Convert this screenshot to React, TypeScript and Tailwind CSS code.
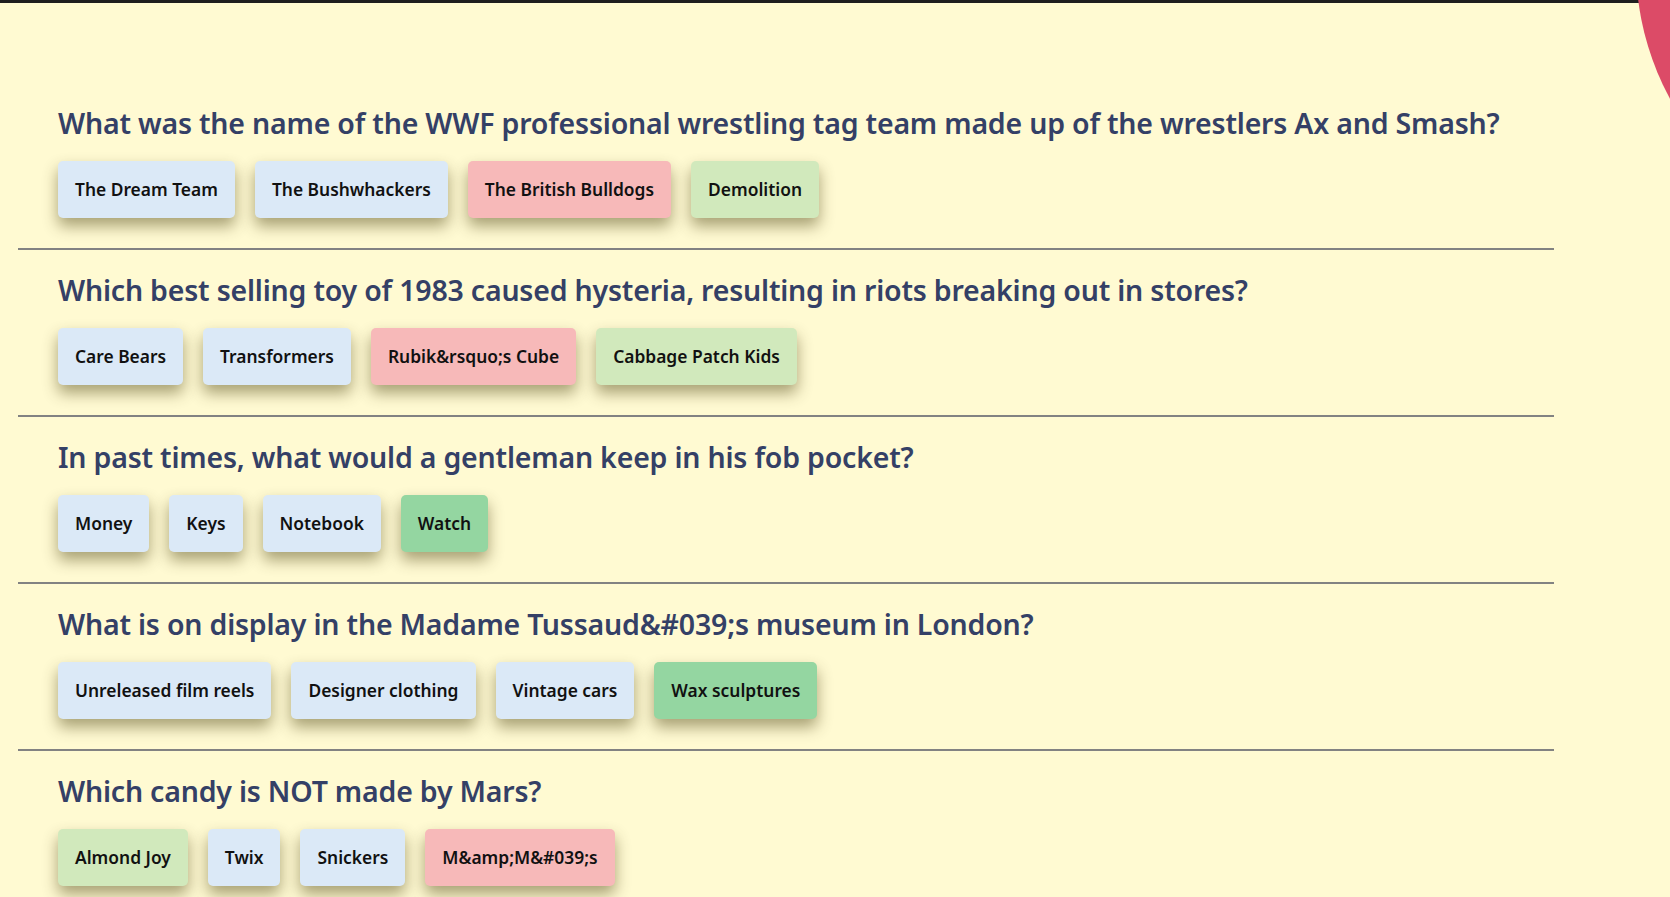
import React from "react";

type Answer = { text: string; color: "blue" | "red" | "lime" | "green" };
type Q = { q: string; answers: Answer[] };

const questions: Q[] = [
  {
    q: "What was the name of the WWF professional wrestling tag team made up of the wrestlers Ax and Smash?",
    answers: [
      { text: "The Dream Team", color: "blue" },
      { text: "The Bushwhackers", color: "blue" },
      { text: "The British Bulldogs", color: "red" },
      { text: "Demolition", color: "lime" },
    ],
  },
  {
    q: "Which best selling toy of 1983 caused hysteria, resulting in riots breaking out in stores?",
    answers: [
      { text: "Care Bears", color: "blue" },
      { text: "Transformers", color: "blue" },
      { text: "Rubik&rsquo;s Cube", color: "red" },
      { text: "Cabbage Patch Kids", color: "lime" },
    ],
  },
  {
    q: "In past times, what would a gentleman keep in his fob pocket?",
    answers: [
      { text: "Money", color: "blue" },
      { text: "Keys", color: "blue" },
      { text: "Notebook", color: "blue" },
      { text: "Watch", color: "green" },
    ],
  },
  {
    q: "What is on display in the Madame Tussaud&#039;s museum in London?",
    answers: [
      { text: "Unreleased film reels", color: "blue" },
      { text: "Designer clothing", color: "blue" },
      { text: "Vintage cars", color: "blue" },
      { text: "Wax sculptures", color: "green" },
    ],
  },
  {
    q: "Which candy is NOT made by Mars?",
    answers: [
      { text: "Almond Joy", color: "lime" },
      { text: "Twix", color: "blue" },
      { text: "Snickers", color: "blue" },
      { text: "M&amp;M&#039;s", color: "red" },
    ],
  },
];

const colorClass: Record<Answer["color"], string> = {
  blue: "bg-[#dbe9f7]",
  red: "bg-[#f7b9b9]",
  lime: "bg-[#d1e9bc]",
  green: "bg-[#94d6a1]",
};

export default function App() {
  return (
    <div
      className="relative w-[1670px] h-[897px] overflow-hidden bg-[#fffad2]"
      style={{ fontFamily: '"Noto Sans", "Open Sans", sans-serif' }}
    >
      <div className="h-[3px] bg-[#1e1e1e]" />
      <div className="absolute left-[1636px] top-[-315px] w-[560px] h-[560px] rounded-full bg-[#dc4b67]" />
      <main className="pt-[80px] pl-[18px]">
        <div className="w-[1536px]">
          {questions.map((item, i) => (
            <section
              key={i}
              className="pl-[40px] pt-[22px] pb-[30px] border-b-2 border-[#828282]"
            >
              <h2 className="text-[28.5px] leading-[36px] font-semibold text-[#344066] tracking-[-0.2px]">
                {item.q}
              </h2>
              <div className="mt-[20px] flex gap-[20px]">
                {item.answers.map((a, j) => (
                  <button
                    key={j}
                    className={`${colorClass[a.color]} h-[57px] px-[17px] rounded-[5px] text-[17.4px] font-semibold text-[#111] shadow-[0_8px_15px_rgba(60,50,0,0.45)]`}
                  >
                    {a.text}
                  </button>
                ))}
              </div>
            </section>
          ))}
        </div>
      </main>
    </div>
  );
}
